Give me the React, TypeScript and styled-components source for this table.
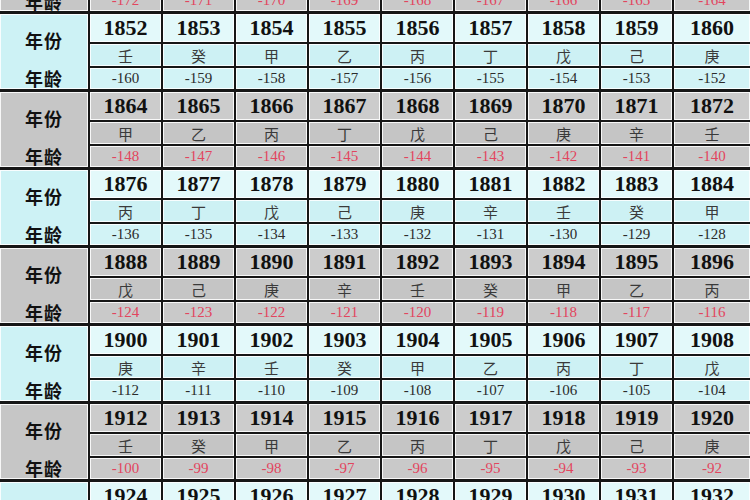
import React from 'react';
import styled, { createGlobalStyle } from 'styled-components';

const GlobalStyle = createGlobalStyle`
  html, body {
    margin: 0;
    padding: 0;
    background: #ffffff;
    overflow: hidden;
  }
`;

type Tone = 'blue' | 'gray';

const palette = {
  blue: { label: '#cdf2f5', year: '#e3f9fa', stem: '#cdf1f4', age: '#d2f3f6', ageText: '#2b2b2b' },
  gray: { label: '#c6c6c6', year: '#cccccc', stem: '#c5c5c5', age: '#c9c9c9', ageText: '#e2455e' }
};

const STEMS = ['甲', '乙', '丙', '丁', '戊', '己', '庚', '辛', '壬', '癸'];

const Sheet = styled.div`
  width: 750px;
  height: 500px;
  display: flex;
  flex-direction: column;
  gap: 3px;
  background: #161616;
  overflow: hidden;
`;

const Group = styled.div`
  display: grid;
  grid-template-columns: 88px repeat(8, 71px) 1fr;
  grid-template-rows: 28px 22px 21px;
  column-gap: 2px;
  row-gap: 2px;
  flex-shrink: 0;
`;

const Tail = styled.div`
  height: 11px;
  flex-shrink: 0;
  overflow: hidden;
  display: flex;
  flex-direction: column;
  justify-content: flex-end;
`;

const TailRow = styled.div`
  display: grid;
  grid-template-columns: 88px repeat(8, 71px) 1fr;
  grid-template-rows: 21px;
  column-gap: 2px;
  flex-shrink: 0;
`;

const Cell = styled.div<{ $bg: string }>`
  background: ${(p) => p.$bg};
  box-shadow: inset 0 0 0 1px rgba(255, 255, 255, 0.85);
  display: flex;
  align-items: center;
  justify-content: center;
  overflow: hidden;
`;

const LabelCell = styled(Cell)<{ $span: number }>`
  grid-row: span ${(p) => p.$span};
  display: grid;
  grid-template-rows: ${(p) => (p.$span === 3 ? '52px 1fr' : '1fr')};
  align-items: center;
  justify-items: center;
`;

const Label = styled.span`
  font-family: "Noto Sans CJK SC", "Noto Sans", sans-serif;
  font-weight: 700;
  font-size: 18px;
  line-height: 1;
  color: #111;
  letter-spacing: 1px;
`;

const Year = styled.span`
  font-family: "Liberation Serif", "DejaVu Serif", serif;
  font-weight: 700;
  font-size: 22px;
  line-height: 1;
  color: #111;
`;

const Stem = styled.span`
  font-family: "Noto Sans CJK SC", sans-serif;
  font-weight: 400;
  font-size: 15px;
  line-height: 1;
  color: #3a3a3a;
`;

const Age = styled.span<{ $color: string }>`
  font-family: "Liberation Serif", "DejaVu Serif", serif;
  font-size: 15px;
  line-height: 1;
  color: ${(p) => p.$color};
`;

const years = (start: number) => Array.from({ length: 9 }, (_, i) => start + i);
const ageOf = (y: number) => `-${2012 - y}`;
const stemOf = (y: number) => STEMS[(y - 4) % 10];

function YearGroup({ start, tone }: { start: number; tone: Tone }) {
  const c = palette[tone];
  const list = years(start);
  return (
    <Group>
      <LabelCell $bg={c.label} $span={3}>
        <Label>年份</Label>
        <Label>年龄</Label>
      </LabelCell>
      {list.map((y) => (
        <Cell key={`y${y}`} $bg={c.year}>
          <Year>{y}</Year>
        </Cell>
      ))}
      {list.map((y) => (
        <Cell key={`s${y}`} $bg={c.stem}>
          <Stem>{stemOf(y)}</Stem>
        </Cell>
      ))}
      {list.map((y) => (
        <Cell key={`a${y}`} $bg={c.age}>
          <Age $color={c.ageText}>{ageOf(y)}</Age>
        </Cell>
      ))}
    </Group>
  );
}

function AgeTail({ start, tone }: { start: number; tone: Tone }) {
  const c = palette[tone];
  return (
    <Tail>
      <TailRow>
        <LabelCell $bg={c.label} $span={1}>
          <Label>年龄</Label>
        </LabelCell>
        {years(start).map((y) => (
          <Cell key={y} $bg={c.age}>
            <Age $color={c.ageText}>{ageOf(y)}</Age>
          </Cell>
        ))}
      </TailRow>
    </Tail>
  );
}

const groups: { start: number; tone: Tone }[] = [
  { start: 1852, tone: 'blue' },
  { start: 1864, tone: 'gray' },
  { start: 1876, tone: 'blue' },
  { start: 1888, tone: 'gray' },
  { start: 1900, tone: 'blue' },
  { start: 1912, tone: 'gray' },
  { start: 1924, tone: 'blue' }
];

export default function App() {
  return (
    <>
      <GlobalStyle />
      <Sheet>
        <AgeTail start={1840} tone="gray" />
        {groups.map((g) => (
          <YearGroup key={g.start} start={g.start} tone={g.tone} />
        ))}
      </Sheet>
    </>
  );
}
